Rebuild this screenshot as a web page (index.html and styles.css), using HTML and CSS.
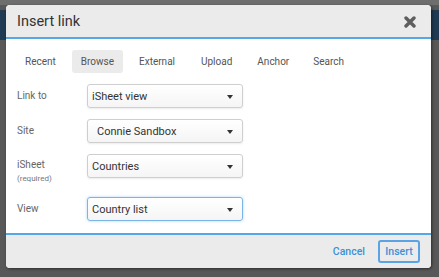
FILE: index.html
```html
<!DOCTYPE html>
<html>
<head>
<meta charset="utf-8">
<link rel="stylesheet" href="styles.css">
</head>
<body>
<div class="backdrop">
  <div class="bg-band"></div>
  <div class="dialog">
    <div class="header">
      <div class="title">Insert link</div>
      <svg class="close" width="12" height="12" viewBox="0 0 12 12"><path d="M2 2 L10 10 M10 2 L2 10" stroke="#5e5e5e" stroke-width="3.4" stroke-linecap="round"/></svg>
    </div>
    <div class="body">
      <div class="tabs">
        <div class="tab">Recent</div>
        <div class="tab active">Browse</div>
        <div class="tab">External</div>
        <div class="tab">Upload</div>
        <div class="tab">Anchor</div>
        <div class="tab">Search</div>
      </div>
      <div class="form">
        <div class="row r1">
          <div class="label">Link to</div>
          <div class="select"><span>iSheet view</span><i class="caret"></i></div>
        </div>
        <div class="row r2">
          <div class="label">Site</div>
          <div class="select"><span class="indent">Connie Sandbox</span><i class="caret"></i></div>
        </div>
        <div class="row r3">
          <div class="label">iSheet<div class="sub">(required)</div></div>
          <div class="select"><span>Countries</span><i class="caret"></i></div>
        </div>
        <div class="row r4">
          <div class="label">View</div>
          <div class="select focus"><span>Country list</span><i class="caret"></i></div>
        </div>
      </div>
    </div>
    <div class="footer">
      <div class="btn-link">Cancel</div>
      <div class="btn">Insert</div>
    </div>
  </div>
</div>
</body>
</html>
```

FILE: styles.css
```css
* { box-sizing: border-box; }
html, body { margin: 0; padding: 0; }
body {
  width: 439px;
  height: 277px;
  overflow: hidden;
  background: #5a5a5a;
  font-family: Roboto, "Liberation Sans", sans-serif;
}
.backdrop {
  position: relative;
  width: 439px;
  height: 277px;
  padding: 5px 0 0 6px;
  background: linear-gradient(#6e6e6e 0, #6e6e6e 5px, #585858 5px);
}
.bg-band {
  position: absolute;
  left: 0;
  top: 10px;
  width: 439px;
  height: 30px;
  background: #1f3a52;
}
.dialog {
  position: relative;
  width: 425px;
  height: 263px;
  background: #fff;
  border-radius: 4px;
  overflow: hidden;
  box-shadow: 1px 1px 3px rgba(0,0,0,0.5);
  display: flex;
  flex-direction: column;
}
.header {
  height: 34px;
  background: #ebebeb;
  border-bottom: 2px solid #55a8e8;
  display: flex;
  align-items: center;
  justify-content: space-between;
  padding: 0 15px 0 11px;
}
.title {
  font-size: 14.5px;
  color: #333;
  padding-top: 1px;
}
.close {
  display: block;
  margin-top: 1px;
}
.body {
  flex: 1;
  padding: 11px 0 0 10px;
}
.tabs {
  display: flex;
  height: 23px;
}
.tab {
  font-size: 10px;
  color: #555;
  padding: 0 9px;
  line-height: 23px;
  border-radius: 3px;
  margin-right: 7px;
}
.tab.active { background: #ebebeb; }
.tab:nth-child(3) { margin-right: 8px; }
.tab:nth-child(5) { margin-right: 6px; }
.form {
  padding-top: 11px;
}
.row {
  display: flex;
  align-items: flex-start;
}
.r2 { margin-top: 11px; }
.r3 { margin-top: 11px; }
.r4 { margin-top: 12px; }
.label {
  width: 71px;
  padding-left: 1px;
  font-size: 10px;
  color: #666;
  line-height: 23px;
}
.r3 .label { line-height: 14px; padding-top: 4px; }
.sub {
  font-size: 8px;
  color: #777;
  line-height: 12px;
  margin-top: 1px;
}
.select {
  width: 156px;
  height: 24px;
  border: 1px solid #cfcfcf;
  border-radius: 3px;
  background: linear-gradient(#fff, #f5f5f5);
  box-shadow: 0 1px 2px rgba(0,0,0,0.08);
  display: flex;
  align-items: center;
  justify-content: space-between;
  padding: 0 9px 0 4px;
  font-size: 11px;
  color: #333;
}
.select .indent { padding-left: 5px; }
.select.focus {
  border-color: #7ab5e6;
  box-shadow: 0 0 3px rgba(80,160,230,0.45);
}
.caret {
  width: 0;
  height: 0;
  border-left: 3.5px solid transparent;
  border-right: 3.5px solid transparent;
  border-top: 4px solid #333;
  margin-top: 1px;
}
.footer {
  height: 35px;
  background: #ebebeb;
  border-top: 2px solid #55a8e8;
  display: flex;
  align-items: center;
  justify-content: flex-end;
  padding: 0 11px 1px 0;
}
.btn-link {
  font-size: 10.5px;
  font-weight: 500;
  color: #3d8fd6;
  margin-right: 13px;
}
.btn {
  font-size: 10.5px;
  font-weight: 500;
  color: #3d8fd6;
  border: 2px solid #5aa4e6;
  border-radius: 3px;
  height: 23px;
  width: 42px;
  display: flex;
  align-items: center;
  justify-content: center;
}
```
